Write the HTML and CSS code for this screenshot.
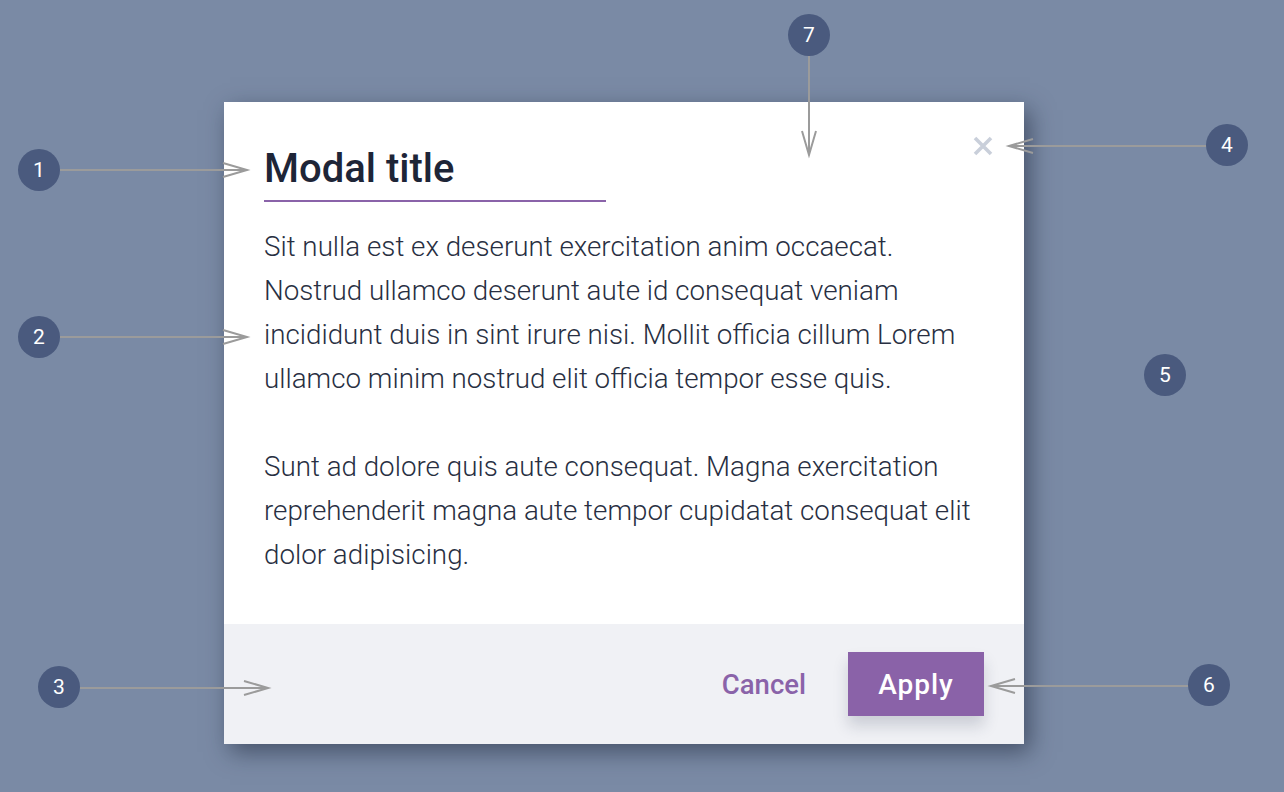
FILE: index.html
```html
<!DOCTYPE html>
<html lang="en">
<head>
<meta charset="utf-8">
<title>Modal anatomy</title>
<link rel="stylesheet" href="styles.css">
</head>
<body>
<div class="stage">
  <div class="modal">
    <div class="modal-body">
      <h1 class="modal-title">Modal title</h1>
      <button class="close" aria-label="Close">
        <svg width="20" height="20" viewBox="0 0 20 20"><path d="M2 2 L18 18 M18 2 L2 18" stroke="#c9cfda" stroke-width="3.6" stroke-linecap="butt" fill="none"/></svg>
      </button>
      <p class="text">Sit nulla est ex deserunt exercitation anim occaecat. Nostrud ullamco deserunt aute id consequat veniam incididunt duis in sint irure nisi. Mollit officia cillum Lorem ullamco minim nostrud elit officia tempor esse quis.</p>
      <p class="text">Sunt ad dolore quis aute consequat. Magna exercitation reprehenderit magna aute tempor cupidatat consequat elit dolor adipisicing.</p>
    </div>
    <div class="modal-footer">
      <button class="btn-cancel">Cancel</button>
      <button class="btn-apply">Apply</button>
    </div>
  </div>

  <svg class="arrows" width="1284" height="792" viewBox="0 0 1284 792">
    <g stroke="#9b9b9b" stroke-width="2" fill="none">
      <path d="M60 170 H247 M223 163 L247 170 L223 177"/>
      <path d="M60 337 H247 M223 330 L247 337 L223 344"/>
      <path d="M80 688 H268 M244 681 L268 688 L244 695"/>
      <path d="M1206 146 H1009 M1033 139 L1009 146 L1033 153"/>
      <path d="M1188 686 H991 M1015 679 L991 686 L1015 693"/>
      <path d="M809 56 V155 M802 131 L809 155 L816 131"/>
    </g>
  </svg>
  <div class="marker m1">1</div>
  <div class="marker m2">2</div>
  <div class="marker m3">3</div>
  <div class="marker m4">4</div>
  <div class="marker m5">5</div>
  <div class="marker m6">6</div>
  <div class="marker m7">7</div>
</div>
</body>
</html>
```
FILE: styles.css
```css
* { box-sizing: border-box; }
html, body {
  margin: 0;
  padding: 0;
}
body {
  width: 1284px;
  height: 792px;
  overflow: hidden;
  background: #7a8aa5;
  font-family: Roboto, "Liberation Sans", sans-serif;
}
.stage {
  position: relative;
  width: 1284px;
  height: 792px;
  padding: 102px 0 0 224px;
}
.modal {
  width: 800px;
  background: #ffffff;
  box-shadow: 6px 8px 22px rgba(28, 36, 56, 0.55);
}
.modal-body {
  position: relative;
  padding: 43px 40px 47px 40px;
}
.modal-title {
  display: block;
  width: 342px;
  margin: 0;
  padding: 0 0 7px 0;
  font-size: 40px;
  line-height: 48px;
  font-weight: 500;
  color: #1e2537;
  border-bottom: 2px solid #8a63a9;
}
.close {
  position: absolute;
  top: 34px;
  right: 31px;
  width: 20px;
  height: 20px;
  padding: 0;
  border: 0;
  background: none;
  display: flex;
}
.text {
  margin: 23px 0 0 0;
  font-size: 27.75px;
  line-height: 44px;
  font-weight: 300;
  color: #282f42;
}
.text + .text {
  margin-top: 44px;
}
.modal-footer {
  height: 120px;
  background: #f0f1f5;
  display: flex;
  align-items: center;
  justify-content: flex-end;
  padding: 0 40px;
  gap: 42px;
}
.btn-cancel {
  border: 0;
  background: none;
  padding: 0;
  font-family: inherit;
  font-size: 27.5px;
  font-weight: 500;
  color: #8a63a9;
}
.btn-apply {
  width: 136px;
  height: 64px;
  border: 0;
  background: #8a62a8;
  color: #ffffff;
  font-family: inherit;
  font-size: 28px;
  font-weight: 500;
  letter-spacing: 1px;
  box-shadow: 0 10px 14px rgba(40, 50, 80, 0.18);
}
.arrows {
  position: absolute;
  left: 0;
  top: 0;
}
.marker {
  position: absolute;
  width: 42px;
  height: 42px;
  border-radius: 50%;
  background: #4a5a7e;
  color: #ffffff;
  font-size: 21px;
  font-weight: 400;
  display: flex;
  align-items: center;
  justify-content: center;
}
.m1 { left: 18px; top: 149px; }
.m2 { left: 18px; top: 316px; }
.m3 { left: 38px; top: 666px; }
.m4 { left: 1206px; top: 124px; }
.m5 { left: 1144px; top: 354px; }
.m6 { left: 1188px; top: 664px; }
.m7 { left: 788px; top: 14px; }
```
